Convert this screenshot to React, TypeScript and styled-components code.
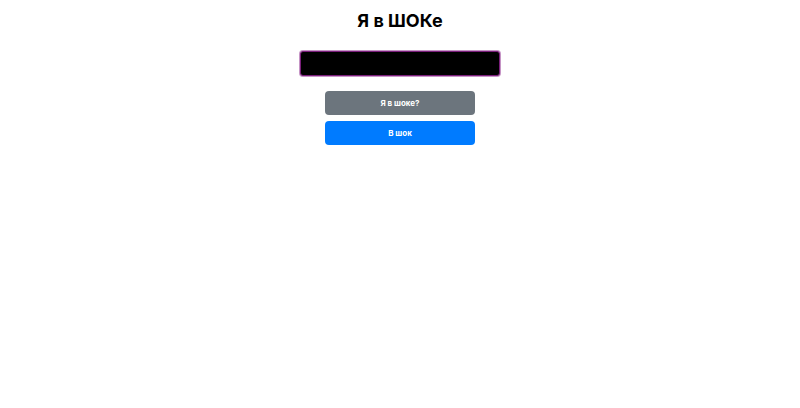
import React from "react";
import styled, { createGlobalStyle } from "styled-components";

const Global = createGlobalStyle`
  html, body { margin: 0; padding: 0; background: #fff; }
  body { font-family: Inter, "Noto Sans", sans-serif; }
`;

const Page = styled.div`
  display: flex;
  flex-direction: column;
  align-items: center;
  padding-top: 10px;
`;

const Title = styled.h1`
  margin: 0;
  font-size: 18px;
  font-weight: 700;
  line-height: 22px;
  color: #000;
`;

const Input = styled.input`
  box-sizing: border-box;
  margin-top: 19px;
  width: 200px;
  height: 25px;
  background: #000;
  border: 1px solid #7a1f7a;
  border-radius: 3px;
  box-shadow: 0 0 0 1px rgba(150, 60, 150, 0.55);
  outline: none;
  color: #fff;
`;

const Buttons = styled.div`
  display: flex;
  flex-direction: column;
  gap: 6px;
  margin-top: 15px;
`;

const Button = styled.button<{ $variant: "secondary" | "primary" }>`
  box-sizing: border-box;
  width: 150px;
  height: 24px;
  border: none;
  border-radius: 4px;
  background: ${(p) => (p.$variant === "primary" ? "#007bff" : "#6c757d")};
  color: #fff;
  font-family: Inter, "Noto Sans", sans-serif;
  font-size: 8px;
  font-weight: 700;
  cursor: pointer;
`;

export default function App() {
  return (
    <Page>
      <Global />
      <Title>Я в ШОКе</Title>
      <Input type="text" />
      <Buttons>
        <Button $variant="secondary">Я в шоке?</Button>
        <Button $variant="primary">В шок</Button>
      </Buttons>
    </Page>
  );
}
